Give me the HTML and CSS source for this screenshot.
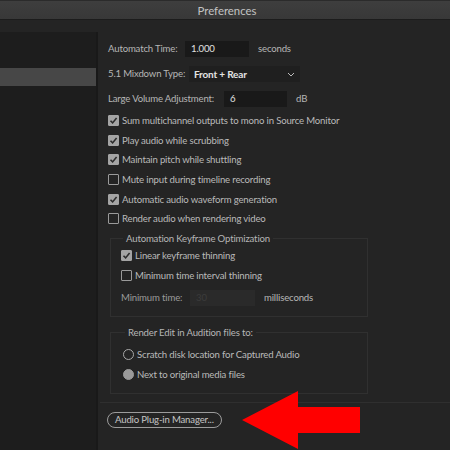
FILE: index.html
```html
<!DOCTYPE html>
<html>
<head>
<meta charset="utf-8">
<link rel="stylesheet" href="styles.css">
</head>
<body>
<div class="window">
  <div class="titlebar">Preferences</div>
  <div class="main">
    <div class="sidebar">
      <div class="side-item"></div>
      <div class="side-item selected"></div>
    </div>
    <div class="content">
      <div class="field-row">
        <span class="label lw77">Automatch Time:</span>
        <span class="input w64">1.000</span>
        <span class="unit">seconds</span>
      </div>
      <div class="field-row">
        <span class="label lw81">5.1 Mixdown Type:</span>
        <span class="select">Front + Rear
          <svg class="chev" width="8" height="5" viewBox="0 0 8 5"><path d="M1 1 L4 4 L7 1" fill="none" stroke="#bbb" stroke-width="1"/></svg>
        </span>
      </div>
      <div class="field-row">
        <span class="label lw116">Large Volume Adjustment:</span>
        <span class="input w63">6</span>
        <span class="unit">dB</span>
      </div>
      <div class="checks">
        <div class="check-row"><span class="box on"><svg viewBox="0 0 11 11" width="11" height="11"><path d="M2.5 5.8 L4.6 7.9 L8.6 3" fill="none" stroke="#2c2c2c" stroke-width="1.6"/></svg></span>Sum multichannel outputs to mono in Source Monitor</div>
        <div class="check-row"><span class="box on"><svg viewBox="0 0 11 11" width="11" height="11"><path d="M2.5 5.8 L4.6 7.9 L8.6 3" fill="none" stroke="#2c2c2c" stroke-width="1.6"/></svg></span>Play audio while scrubbing</div>
        <div class="check-row"><span class="box on"><svg viewBox="0 0 11 11" width="11" height="11"><path d="M2.5 5.8 L4.6 7.9 L8.6 3" fill="none" stroke="#2c2c2c" stroke-width="1.6"/></svg></span>Maintain pitch while shuttling</div>
        <div class="check-row"><span class="box"></span>Mute input during timeline recording</div>
        <div class="check-row"><span class="box on"><svg viewBox="0 0 11 11" width="11" height="11"><path d="M2.5 5.8 L4.6 7.9 L8.6 3" fill="none" stroke="#2c2c2c" stroke-width="1.6"/></svg></span>Automatic audio waveform generation</div>
        <div class="check-row"><span class="box"></span>Render audio when rendering video</div>
      </div>
      <fieldset class="group g1">
        <legend>Automation Keyframe Optimization</legend>
        <div class="check-row first"><span class="box on"><svg viewBox="0 0 11 11" width="11" height="11"><path d="M2.5 5.8 L4.6 7.9 L8.6 3" fill="none" stroke="#2c2c2c" stroke-width="1.6"/></svg></span>Linear keyframe thinning</div>
        <div class="check-row"><span class="box"></span>Minimum time interval thinning</div>
        <div class="field-row small">
          <span class="label dim lw69">Minimum time:</span>
          <span class="input disabled">30</span>
          <span class="unit">milliseconds</span>
        </div>
      </fieldset>
      <fieldset class="group g2">
        <legend>Render Edit in Audition files to:</legend>
        <div class="radio-row first"><span class="radio"></span>Scratch disk location for Captured Audio</div>
        <div class="radio-row"><span class="radio on"></span>Next to original media files</div>
      </fieldset>
      <div class="divider"></div>
      <div class="button-row">
        <span class="button">Audio Plug-in Manager...</span>
      </div>
    </div>
  </div>
  <svg class="arrow" width="120" height="60" viewBox="0 0 120 60"><polygon points="0,29 56,0 56,16 118,16 118,42 56,42 56,58" fill="#ff0000"/></svg>
</div>
</body>
</html>
```
FILE: styles.css
```css
html, body {
  margin: 0;
  padding: 0;
  background: #232323;
}
.window {
  position: relative;
  width: 450px;
  height: 450px;
  overflow: hidden;
  background: #242424;
  font-family: Lato, "Open Sans", sans-serif;
  font-size: 9.6px;
  letter-spacing: -0.17px;
  color: #bababa;
}
.titlebar {
  height: 18px;
  line-height: 19px;
  border-top: 1px solid #2b2b2b;
  border-bottom: 1px solid #1c1c1c;
  background: linear-gradient(#3e3e3e, #383838);
  text-align: center;
  color: #c2c2c2;
  font-size: 11.4px;
  letter-spacing: 0;
  padding-left: 4px;
}
.main {
  display: flex;
  height: 430px;
}
.sidebar {
  width: 96px;
  margin-top: 12px;
  background: #1d1d1d;
  border-right: 2px solid #191919;
  padding-top: 24px;
  flex-shrink: 0;
}
.side-item {
  height: 12px;
}
.side-item.selected {
  height: 18px;
  background: #474747;
}
.content {
  flex: 1;
  padding-left: 10px;
  padding-top: 16px;
}
.field-row {
  display: flex;
  align-items: center;
  height: 25px;
  white-space: nowrap;
}
.label {
  color: #b6b6b6;
  flex-shrink: 0;
}
.lw77 { width: 77px; }
.lw81 { width: 81px; }
.lw116 { width: 116px; }
.lw69 { width: 69px; }
.input {
  height: 16px;
  line-height: 16px;
  background: #191919;
  color: #e0e0e0;
  padding-left: 6px;
  box-sizing: border-box;
}
.w64 { width: 64px; }
.w63 { width: 63px; }
.unit {
  margin-left: 9px;
  color: #b6b6b6;
}
.select {
  display: flex;
  align-items: center;
  justify-content: space-between;
  width: 111px;
  height: 16px;
  box-sizing: border-box;
  padding: 0 5px;
  background: #1f1f1f;
  color: #e4e4e4;
  font-weight: 700;
  font-size: 10px;
}
.chev {
  margin-top: 1px;
}
.check-row {
  display: flex;
  align-items: center;
  height: 19.6px;
  white-space: nowrap;
  color: #bababa;
}
.box {
  width: 11px;
  height: 11px;
  box-sizing: border-box;
  border: 1px solid #9a9a9a;
  border-radius: 1px;
  margin-right: 3px;
  flex-shrink: 0;
  display: flex;
}
.box.on {
  background: #a4a4a4;
  border-color: #a4a4a4;
}
.box.on svg {
  margin: -1px;
}
.group {
  margin: 0;
  margin-left: 2px;
  width: 258px;
  box-sizing: border-box;
  border: 1px solid #303030;
  padding: 0 0 0 10px;
}
.group legend {
  padding: 0 3px;
  margin-left: 2px;
  color: #b6b6b6;
  line-height: 12px;
}
.g1 {
  margin-top: 4px;
  height: 84px;
}
.g1 .check-row {
  height: 20px;
}
.g1 .check-row.first {
  margin-top: 1px;
}
.field-row.small {
  height: 24px;
}
.label.dim {
  color: #9a9a9a;
}
.input.disabled {
  width: 65px;
  background: #2a2a2a;
  color: #3c3c3c;
}
.g2 {
  margin-top: 10px;
  height: 67px;
  padding-left: 12px;
}
.radio-row {
  display: flex;
  align-items: center;
  height: 20px;
  white-space: nowrap;
  color: #bababa;
}
.radio-row.first {
  margin-top: 6px;
}
.radio {
  width: 11px;
  height: 11px;
  box-sizing: border-box;
  border: 1.5px solid #a8a8a8;
  border-radius: 50%;
  margin-right: 3px;
  flex-shrink: 0;
}
.radio.on {
  background: #9a9a9a;
  border-color: #9a9a9a;
}
.divider {
  margin-top: 8px;
  margin-left: -8px;
  height: 1px;
  background: #2f2f2f;
}
.button-row {
  padding-top: 9px;
  display: flex;
}
.button {
  display: inline-block;
  height: 16px;
  line-height: 14px;
  box-sizing: border-box;
  border: 1px solid #9c9c9c;
  border-radius: 8px;
  padding: 0 7px;
  margin-left: -1px;
  color: #c4c4c4;
  white-space: nowrap;
}
.arrow {
  position: absolute;
  left: 242px;
  top: 391px;
}
```
